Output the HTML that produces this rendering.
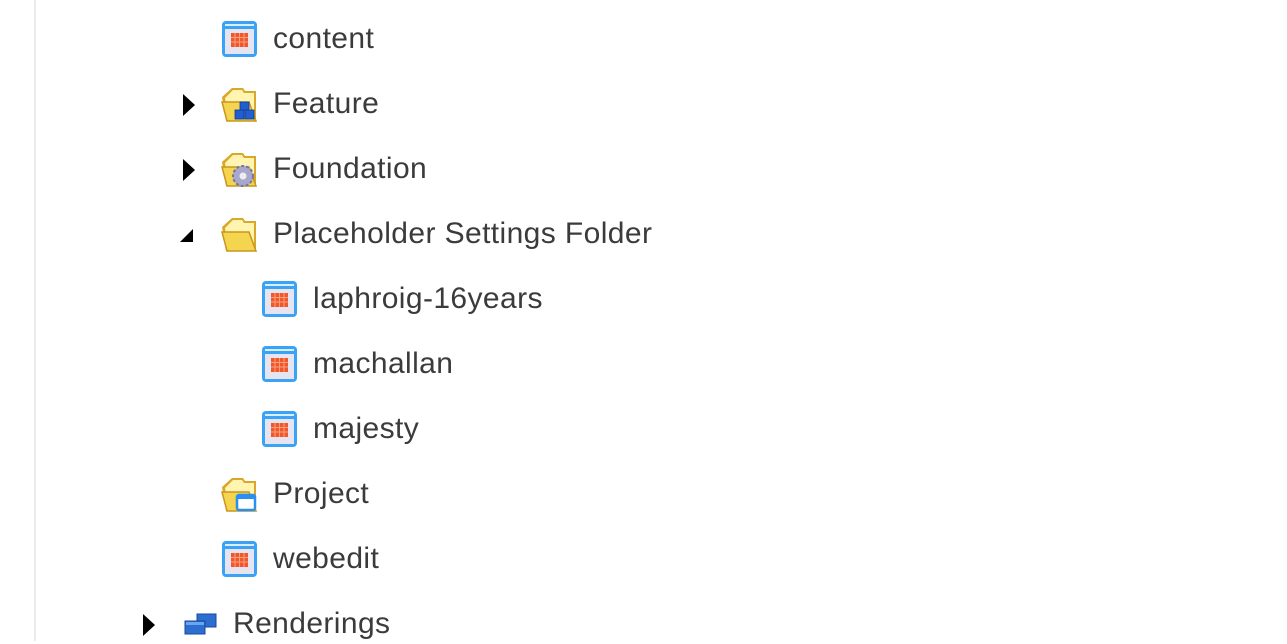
<!DOCTYPE html>
<html><head><style>
body{margin:0;width:1287px;height:641px;background:#fff;position:relative;overflow:hidden;font-family:"Liberation Sans",sans-serif;}
.vl{position:absolute;left:34px;top:0;width:2px;height:641px;background:#ebebeb}
.r{position:absolute;height:40px;}
.t{position:absolute;font-size:30px;color:#3b3b3b;white-space:nowrap;line-height:40px;top:0px;letter-spacing:0.4px}
.ic{position:absolute;top:1px}
.ar{position:absolute;top:10px;width:0;height:0;border-top:11px solid transparent;border-bottom:11px solid transparent;border-left:12px solid #000}
.ad{position:absolute;top:15px;width:0;height:0;border-left:13px solid transparent;border-bottom:13px solid #000}
</style></head><body>
<div class="vl"></div>
<svg width="0" height="0" style="position:absolute">
<defs>
<g id="cal">
<rect x="1" y="1" width="35" height="36" rx="4" fill="#3aa3f5"/>
<rect x="4" y="9" width="29" height="25" fill="#e6e4f0"/>
<rect x="4" y="4" width="29" height="2" fill="#d9eeff"/>
<rect x="10" y="13" width="17" height="14" fill="#f2572c"/>
<path d="M14 13v14M18.5 13v14M23 13v14M10 17.5h17M10 22h17" stroke="#f6a080" stroke-width="1"/>
</g>
<g id="fold">
<path d="M1 12 L11 3 L22 3 L24 6 L35 6 L35 36 L5 36 Z" fill="#d9a72a"/>
<path d="M4 13 L12 5 L21 5 L23 8 L33 8 L33 34 L7 34 Z" fill="#fff5b0"/>
<path d="M1 17 L28 17 L35 36 L6 36 Z" fill="#f5d44f" stroke="#c9961e" stroke-width="1.5"/>
</g>
</defs>
</svg>
<div class="r" style="top:19px;left:0;width:900px">
<svg class="ic" style="left:221px" width="37" height="38"><use href="#cal"/></svg>
<div class="t" style="left:273px">content</div></div>
<div class="r" style="top:84px;left:0;width:900px">
<div class="ar" style="left:183px"></div>
<svg class="ic" style="left:221px" width="37" height="38"><use href="#fold"/><g fill="#1f5fd1" stroke="#0d3b99" stroke-width=".8"><rect x="19" y="17" width="9" height="8"/><rect x="14" y="25" width="9" height="9"/><rect x="24" y="25" width="9" height="9"/></g></svg>
<div class="t" style="left:273px">Feature</div></div>
<div class="r" style="top:149px;left:0;width:900px">
<div class="ar" style="left:183px"></div>
<svg class="ic" style="left:221px" width="37" height="38"><use href="#fold"/><circle cx="22" cy="26" r="10" fill="#a8a8cc" stroke="#7676a0" stroke-width="2" stroke-dasharray="3 2"/><circle cx="22" cy="26" r="3.5" fill="#eee"/></svg>
<div class="t" style="left:273px">Foundation</div></div>
<div class="r" style="top:214px;left:0;width:900px">
<div class="ad" style="left:180px"></div>
<svg class="ic" style="left:221px" width="37" height="38"><use href="#fold"/></svg>
<div class="t" style="left:273px">Placeholder Settings Folder</div></div>
<div class="r" style="top:279px;left:0;width:900px">
<svg class="ic" style="left:261px" width="37" height="38"><use href="#cal"/></svg>
<div class="t" style="left:313px">laphroig-16years</div></div>
<div class="r" style="top:344px;left:0;width:900px">
<svg class="ic" style="left:261px" width="37" height="38"><use href="#cal"/></svg>
<div class="t" style="left:313px">machallan</div></div>
<div class="r" style="top:409px;left:0;width:900px">
<svg class="ic" style="left:261px" width="37" height="38"><use href="#cal"/></svg>
<div class="t" style="left:313px">majesty</div></div>
<div class="r" style="top:474px;left:0;width:900px">
<svg class="ic" style="left:221px" width="37" height="38"><use href="#fold"/><rect x="16" y="20" width="18" height="15" rx="2" fill="#fff" stroke="#2a8ff0" stroke-width="2.5"/><rect x="16" y="20" width="18" height="4" fill="#2a8ff0"/></svg>
<div class="t" style="left:273px">Project</div></div>
<div class="r" style="top:539px;left:0;width:900px">
<svg class="ic" style="left:221px" width="37" height="38"><use href="#cal"/></svg>
<div class="t" style="left:273px">webedit</div></div>
<div class="r" style="top:604px;left:0;width:900px">
<div class="ar" style="left:143px"></div>
<svg class="ic" style="left:181px" width="40" height="38"><rect x="16" y="9" width="19" height="13" fill="#2d6fd0" stroke="#174a9c"/><rect x="4" y="16" width="20" height="13" fill="#2d6fd0" stroke="#174a9c"/><rect x="5" y="17" width="18" height="3" fill="#6aa6f0"/></svg>
<div class="t" style="left:233px">Renderings</div></div>
</body></html>
